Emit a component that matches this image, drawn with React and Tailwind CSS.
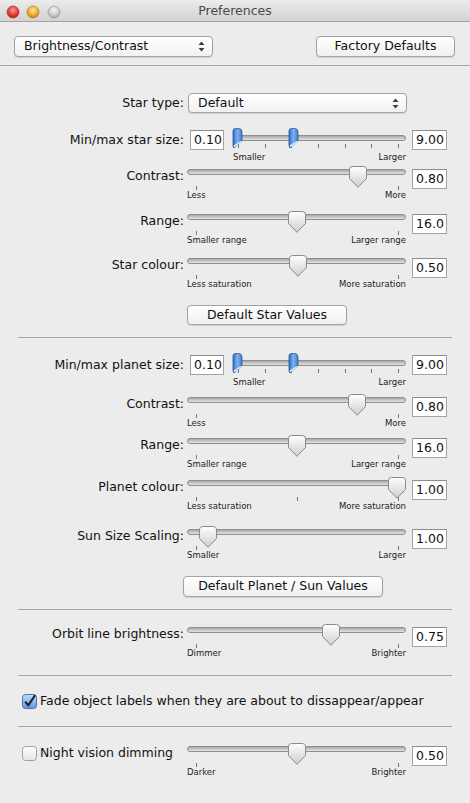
import React from 'react'

const font = "font-['DejaVu_Sans',sans-serif]"

const TrafficLights = () => (
  <svg width="64" height="22" viewBox="0 0 64 22">
    <defs>
      <radialGradient id="tlr" cx="50%" cy="35%" r="60%">
        <stop offset="0" stopColor="#ff9a93" />
        <stop offset="0.6" stopColor="#e8463f" />
        <stop offset="1" stopColor="#b9201b" />
      </radialGradient>
      <radialGradient id="tly" cx="50%" cy="35%" r="60%">
        <stop offset="0" stopColor="#ffe6a0" />
        <stop offset="0.6" stopColor="#f2b23a" />
        <stop offset="1" stopColor="#c98415" />
      </radialGradient>
      <radialGradient id="tlg" cx="50%" cy="35%" r="60%">
        <stop offset="0" stopColor="#f4f4f4" />
        <stop offset="0.6" stopColor="#d2d2d2" />
        <stop offset="1" stopColor="#ababab" />
      </radialGradient>
    </defs>
    <circle cx="13" cy="12" r="6" fill="url(#tlr)" stroke="#a8322d" strokeWidth="0.7" />
    <circle cx="33" cy="12" r="6" fill="url(#tly)" stroke="#b37d21" strokeWidth="0.7" />
    <circle cx="54" cy="12" r="6" fill="url(#tlg)" stroke="#9a9a9a" strokeWidth="0.7" />
  </svg>
)

const Arrows = () => (
  <svg width="7" height="11" viewBox="0 0 7 11">
    <path d="M3.5 0.5 L6.5 4 H0.5 Z" fill="#3d3d3d" />
    <path d="M3.5 10.5 L6.5 7 H0.5 Z" fill="#3d3d3d" />
  </svg>
)

const Popup = ({ label, className }) => (
  <div className={`flex items-center justify-between rounded-[4px] border border-[#a2a2a2] bg-gradient-to-b from-white to-[#f1f1f1] shadow-[0_1px_1px_rgba(0,0,0,0.12)] pl-[9px] pr-[7px] text-[12.5px] text-[#111] ${className}`}>
    <span>{label}</span>
    <Arrows />
  </div>
)

const Button = ({ label, className }) => (
  <div className={`flex items-center justify-center rounded-[4px] border border-[#a2a2a2] bg-gradient-to-b from-white to-[#f0f0f0] shadow-[0_1px_1px_rgba(0,0,0,0.12)] text-[12.5px] text-[#111] ${className}`}>
    {label}
  </div>
)

const Field = ({ value, className = '' }) => (
  <div className={`w-[35px] h-[20px] bg-white border border-[#a3a3a3] border-t-[#8c8c8c] pl-[3px] text-[12.5px] leading-[18px] text-[#111] ${className}`}>
    {value}
  </div>
)

const Thumb = ({ left }) => (
  <svg className="absolute top-[0px]" style={{ left }} width="18" height="22" viewBox="0 0 18 22">
    <defs>
      <linearGradient id="thg" x1="0" y1="0" x2="0" y2="1">
        <stop offset="0" stopColor="#ffffff" />
        <stop offset="1" stopColor="#cdcdcd" />
      </linearGradient>
    </defs>
    <path d="M3.5 0.5 H14.5 Q17.5 0.5 17.5 3.5 V12.5 L9 21.3 L0.5 12.5 V3.5 Q0.5 0.5 3.5 0.5 Z" fill="url(#thg)" stroke="#8a8a8a" />
  </svg>
)

const BlueThumb = ({ left }) => (
  <svg className="absolute top-[-2px]" style={{ left }} width="11" height="21" viewBox="0 0 11 21">
    <defs>
      <linearGradient id="bthg" x1="0" y1="0" x2="1" y2="0">
        <stop offset="0" stopColor="#2d6fce" />
        <stop offset="0.5" stopColor="#7fb0ec" />
        <stop offset="1" stopColor="#3f7fd8" />
      </linearGradient>
    </defs>
    <path d="M1 3 Q1 0.5 3.5 0.5 H6.5 Q10 0.5 10 4 V12.5 L2 20 L1 18 Z" fill="url(#bthg)" stroke="#2a5590" strokeWidth="0.8" />
    <path d="M1.6 17.5 L9.4 12.8 V13.8 L2.4 19.2 Z" fill="#e8f1fb" />
  </svg>
)

const Track = ({ top }) => (
  <div className={`absolute left-0 right-0 h-[6px] rounded-full border border-[#8f8f8f] bg-gradient-to-b from-[#a9a9a9] to-[#e4e4e4] ${top}`} />
)

const Tick = ({ left, top }) => (
  <div className={`absolute w-px h-[4px] bg-[#777] ${top}`} style={{ left }} />
)

const Slider = ({ thumb, left, right, ticks = [9, 211] }) => (
  <div className="relative w-[219px] h-[34px] ml-[2px]">
    <Track top="top-[3px]" />
    {ticks.map((t) => (
      <Tick key={t} left={t} top="top-[20px]" />
    ))}
    <Thumb left={thumb} />
    <div className="flex justify-between pt-[25px] text-[8.5px] leading-[9px] text-[#222]">
      <span>{left}</span>
      <span>{right}</span>
    </div>
  </div>
)

const DualSlider = () => {
  const ticks = [5, 31.7, 58.3, 85, 111.7, 138.3, 165]
  return (
    <div className="relative w-[173px] h-[33px] ml-[9px]">
      <Track top="top-[5px]" />
      {ticks.map((t) => (
        <Tick key={t} left={Math.round(t)} top="top-[14px]" />
      ))}
      <BlueThumb left={-1} />
      <BlueThumb left={55} />
      <div className="flex justify-between pt-[22px] text-[8.5px] leading-[10px] text-[#222]">
        <span>Smaller</span>
        <span>Larger</span>
      </div>
    </div>
  )
}

const Label = ({ children }) => (
  <div className="w-[185px] h-[20px] pr-[1px] text-right leading-[20px] text-[12.5px] text-[#111] whitespace-nowrap">{children}</div>
)

const SliderRow = ({ label, value, className, ...rest }) => (
  <div className={`flex items-start ${className}`}>
    <Label>{label}</Label>
    <Slider {...rest} />
    <Field value={value} className="ml-[6px] mt-[3px]" />
  </div>
)

const SizeRow = ({ label, className }) => (
  <div className={`flex items-start ${className}`}>
    <Label>{label}</Label>
    <Field value="0.10" className="ml-[5px] !w-[34px]" />
    <DualSlider />
    <Field value="9.00" className="ml-[6px]" />
  </div>
)

const Checkbox = ({ checked }) =>
  checked ? (
    <svg width="15" height="15" viewBox="0 0 15 15" className="overflow-visible">
      <defs>
        <linearGradient id="cbc" x1="0" y1="0" x2="0" y2="1">
          <stop offset="0" stopColor="#c6dcf7" />
          <stop offset="1" stopColor="#5b97e2" />
        </linearGradient>
      </defs>
      <rect x="0.5" y="0.5" width="14" height="14" rx="3" fill="url(#cbc)" stroke="#4b74a8" />
      <path d="M3.2 7.6 L6.3 11.4 L13.2 1" fill="none" stroke="#1d2838" strokeWidth="2.2" strokeLinejoin="round" />
    </svg>
  ) : (
    <svg width="15" height="15" viewBox="0 0 15 15">
      <defs>
        <linearGradient id="cbu" x1="0" y1="0" x2="0" y2="1">
          <stop offset="0" stopColor="#ffffff" />
          <stop offset="1" stopColor="#e4e4e4" />
        </linearGradient>
      </defs>
      <rect x="0.5" y="0.5" width="14" height="14" rx="3" fill="url(#cbu)" stroke="#a0a0a0" />
    </svg>
  )

const Sep = ({ className }) => <div className={`h-px bg-[#a8a8a8] ${className}`} />

export default function App() {
  return (
    <div className={`w-[470px] h-[803px] overflow-hidden bg-[#ececec] ${font} text-[#111]`}>
      <div className="grid grid-cols-[1fr_auto_1fr] items-center h-[22px] border-b border-[#a3a3a3] bg-gradient-to-b from-[#ececec] to-[#d2d2d2]">
        <TrafficLights />
        <div className="text-[12.5px] text-[#4a4a4a] leading-[22px]">Preferences</div>
        <div />
      </div>

      <div className="flex justify-between pl-[14px] pr-[15px] mt-[14px]">
        <Popup label="Brightness/Contrast" className="w-[199px] h-[21px]" />
        <Button label="Factory Defaults" className="w-[139px] h-[21px]" />
      </div>

      <Sep className="mt-[8px]" />

      <div className="flex items-center mt-[27px]">
        <Label>Star type:</Label>
        <Popup label="Default" className="ml-[3px] w-[219px] h-[20px]" />
      </div>

      <SizeRow label="Min/max star size:" className="mt-[17px]" />
      <SliderRow label="Contrast:" value="0.80" thumb={162} left="Less" right="More" className="mt-[3px]" />
      <SliderRow label="Range:" value="16.0" thumb={101} left="Smaller range" right="Larger range" className="mt-[11px]" />
      <SliderRow label="Star colour:" value="0.50" thumb={102} left="Less saturation" right="More saturation" className="mt-[10px]" />

      <Button label="Default Star Values" className="ml-[187px] mt-[16px] w-[160px] h-[20px]" />

      <Sep className="mt-[12px] mx-[18px]" />

      <SizeRow label="Min/max planet size:" className="mt-[17px]" />
      <SliderRow label="Contrast:" value="0.80" thumb={161} left="Less" right="More" className="mt-[6px]" />
      <SliderRow label="Range:" value="16.0" thumb={101} left="Smaller range" right="Larger range" className="mt-[7px]" />
      <SliderRow label="Planet colour:" value="1.00" thumb={201} ticks={[9, 110, 211]} left="Less saturation" right="More saturation" className="mt-[8px]" />
      <SliderRow label="Sun Size Scaling:" value="1.00" thumb={12} left="Smaller" right="Larger" className="mt-[15px]" />

      <Button label="Default Planet / Sun Values" className="ml-[183px] mt-[16px] w-[200px] h-[21px]" />

      <Sep className="mt-[12px] mx-[18px]" />

      <SliderRow label="Orbit line brightness:" value="0.75" thumb={135} left="Dimmer" right="Brighter" className="mt-[14px]" />

      <Sep className="mt-[17px] mx-[18px]" />

      <div className="flex items-center h-[20px] pl-[22px] mt-[15px]">
        <Checkbox checked />
        <span className="ml-[3px] text-[12.5px]">Fade object labels when they are about to dissappear/appear</span>
      </div>

      <Sep className="mt-[15px] mx-[18px]" />

      <div className="flex items-start mt-[16px]">
        <div className="w-[185px] h-[20px] flex items-center pl-[22px]">
          <Checkbox />
          <span className="ml-[3px] text-[12.5px]">Night vision dimming</span>
        </div>
        <Slider thumb={101} left="Darker" right="Brighter" />
        <Field value="0.50" className="ml-[6px] mt-[3px]" />
      </div>
    </div>
  )
}
